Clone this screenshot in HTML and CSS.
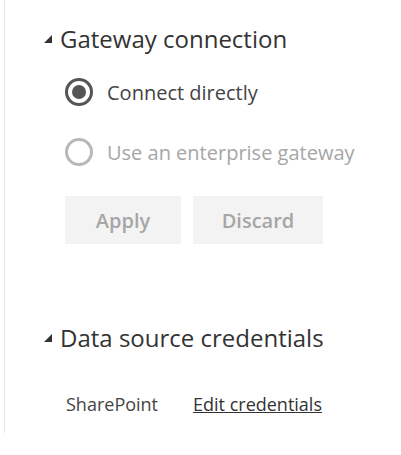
FILE: index.html
```html
<!DOCTYPE html>
<html lang="en">
<head>
    <meta charset="UTF-8">
    <meta name="viewport" content="width=device-width, initial-scale=1.0">
    <title>Gateway settings</title>
    <link rel="stylesheet" href="styles.css">
</head>
<body>
<div class="panel">
    <div class="section">
        <h2 class="section-title">
            <svg class="caret" width="8" height="8" viewBox="0 0 8 8"><polygon points="8,0 8,8 0,8" fill="#333"/></svg>
            Gateway connection
        </h2>

        <label class="radio checked">
            <span class="radio-ring"><span class="radio-dot"></span></span>
            Connect directly
        </label>
        <label class="radio disabled">
            <span class="radio-ring"></span>
            Use an enterprise gateway
        </label>

        <div class="button-row">
            <button type="button" class="btn btn-apply" disabled>Apply</button>
            <button type="button" class="btn btn-discard" disabled>Discard</button>
        </div>
    </div>

    <div class="section credentials">
        <h2 class="section-title">
            <svg class="caret" width="8" height="8" viewBox="0 0 8 8"><polygon points="8,0 8,8 0,8" fill="#333"/></svg>
            Data source credentials
        </h2>

        <div class="cred-row">
            <span class="cred-name">SharePoint</span>
            <a class="cred-link" href="#">Edit credentials</a>
        </div>
    </div>
</div>
</body>
</html>
```

FILE: styles.css
```css
body {
    font-family: "Open Sans", "Noto Sans", sans-serif;
    background-color: #fff;
    margin: 0;
    padding: 0;
}

.panel {
    margin-left: 4px;
    height: 433px;
    border-left: 1px solid #e6e6e6;
    padding-left: 39px;
    box-sizing: border-box;
    padding-top: 23px;
}

.section-title {
    display: flex;
    align-items: center;
    margin: 0;
    font-size: 24px;
    font-weight: normal;
    color: #333;
    line-height: 32px;
}

.caret {
    margin-right: 8px;
    flex-shrink: 0;
}

.radio {
    display: flex;
    align-items: center;
    height: 60px;
    margin-left: 21px;
    font-size: 20px;
    color: #444;
}

.radio:first-of-type {
    margin-top: 7px;
}

.radio-ring {
    width: 28px;
    height: 28px;
    border: 3px solid #555;
    border-radius: 50%;
    box-sizing: border-box;
    display: flex;
    align-items: center;
    justify-content: center;
    margin-right: 14px;
}

.radio-dot {
    width: 14px;
    height: 14px;
    border-radius: 50%;
    background-color: #555;
}

.radio.disabled {
    color: #a6a6a6;
}

.radio.disabled .radio-ring {
    border-color: #b8b8b8;
}

.button-row {
    display: flex;
    gap: 12px;
    margin-left: 21px;
    margin-top: 14px;
}

.btn {
    height: 48px;
    border: none;
    background-color: #f3f3f3;
    color: #a6a6a6;
    font-family: inherit;
    font-size: 20px;
    font-weight: 600;
    padding: 0;
}

.btn-apply {
    width: 116px;
}

.btn-discard {
    width: 130px;
}

.credentials {
    margin-top: 78px;
}

.cred-row {
    display: flex;
    margin-left: 22px;
    margin-top: 38px;
    font-size: 18px;
    line-height: 24px;
    color: #444;
}

.cred-name {
    width: 127px;
}

.cred-link {
    color: #333;
    text-decoration: underline;
}
```
